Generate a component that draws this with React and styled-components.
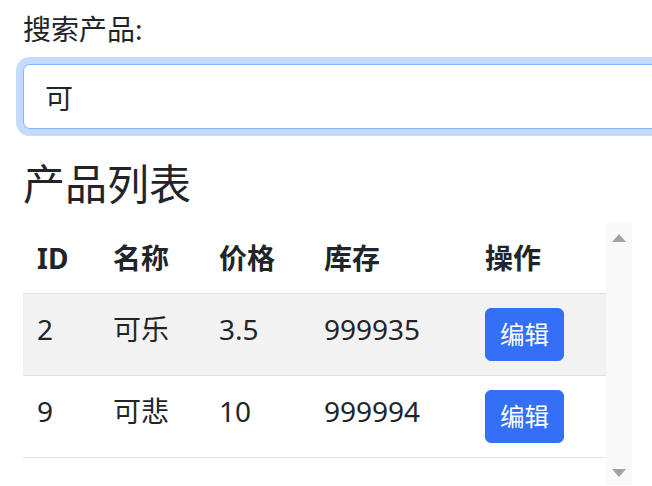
import { useEffect, useRef } from 'react';
import styled, { createGlobalStyle } from 'styled-components';

const GlobalStyle = createGlobalStyle`
  html, body {
    margin: 0;
    padding: 0;
    overflow: hidden;
    background: #ffffff;
  }
  body {
    font-family: "Noto Sans", "Noto Sans CJK SC", sans-serif;
    color: #212529;
  }
`;

const Page = styled.div`
  padding: 8px 0 0 23px;
  width: 720px;
`;

const Label = styled.label`
  display: block;
  font-size: 28px;
  line-height: 42px;
  margin-bottom: 14px;
`;

const SearchInput = styled.input`
  display: block;
  box-sizing: border-box;
  width: 700px;
  height: 65px;
  padding: 10px 21px;
  font-family: inherit;
  font-size: 28px;
  line-height: 42px;
  color: #212529;
  background: #fff;
  border: 1px solid #86b7fe;
  border-radius: 7px;
  box-shadow: 0 0 0 7px rgba(13, 110, 253, 0.25);
  outline: none;
  caret-color: #212529;
`;

const Heading = styled.h3`
  margin: 30px 0 14px;
  font-size: 42px;
  line-height: 50px;
  font-weight: 400;
`;

const ScrollBox = styled.div`
  display: flex;
  width: 609px;
  height: 262px;
`;

const TableArea = styled.div`
  flex: 1;
`;

const Table = styled.table`
  width: 100%;
  border-collapse: collapse;
  table-layout: fixed;
  vertical-align: top;
  font-size: 28px;
  line-height: 42px;
`;

const HeadCell = styled.th`
  text-align: left;
  font-weight: 700;
  padding: 14px;
  border-bottom: 1px solid #dee2e6;
`;

const Row = styled.tr`
  background: ${(p) => (p.$striped ? '#f2f2f2' : '#fff')};
`;

const Cell = styled.td`
  padding: 14px;
  border-bottom: 1px solid #dee2e6;
  vertical-align: top;
`;

const EditButton = styled.button`
  display: block;
  box-sizing: border-box;
  height: 53px;
  padding: 7px 14px;
  font-family: inherit;
  font-size: 24.5px;
  line-height: 37px;
  color: #fff;
  background: #3370f7;
  border: 1px solid #3370f7;
  border-radius: 6px;
  white-space: nowrap;
`;

const ScrollTrack = styled.div`
  width: 26px;
  background: #f9f9f9;
  display: flex;
  flex-direction: column;
  justify-content: space-between;
  align-items: center;
  padding: 11px 0 8px;
  box-sizing: border-box;
`;

const Arrow = ({ down }) => (
  <svg width="14" height="8" viewBox="0 0 14 8">
    <polygon points={down ? '0,0 14,0 7,8' : '0,8 14,8 7,0'} fill="#a3a3a3" />
  </svg>
);

const columns = [
  { key: 'id', title: 'ID', width: 76 },
  { key: 'name', title: '名称', width: 106 },
  { key: 'price', title: '价格', width: 105 },
  { key: 'stock', title: '库存', width: 161 },
  { key: 'op', title: '操作' },
];

const products = [
  { id: 2, name: '可乐', price: '3.5', stock: 999935 },
  { id: 9, name: '可悲', price: '10', stock: 999994 },
];

export default function App() {
  const inputRef = useRef(null);

  useEffect(() => {
    inputRef.current?.focus({ preventScroll: true });
  }, []);

  return (
    <>
      <GlobalStyle />
      <Page>
        <Label htmlFor="search">搜索产品:</Label>
        <SearchInput id="search" ref={inputRef} defaultValue="可" />
        <Heading>产品列表</Heading>
        <ScrollBox>
          <TableArea>
            <Table>
              <colgroup>
                {columns.map((c) => (
                  <col key={c.key} style={c.width ? { width: c.width } : undefined} />
                ))}
              </colgroup>
              <thead>
                <tr>
                  {columns.map((c) => (
                    <HeadCell key={c.key}>{c.title}</HeadCell>
                  ))}
                </tr>
              </thead>
              <tbody>
                {products.map((p, i) => (
                  <Row key={p.id} $striped={i % 2 === 0}>
                    <Cell>{p.id}</Cell>
                    <Cell>{p.name}</Cell>
                    <Cell>{p.price}</Cell>
                    <Cell>{p.stock}</Cell>
                    <Cell>
                      <EditButton>编辑</EditButton>
                    </Cell>
                  </Row>
                ))}
              </tbody>
            </Table>
          </TableArea>
          <ScrollTrack>
            <Arrow />
            <Arrow down />
          </ScrollTrack>
        </ScrollBox>
      </Page>
    </>
  );
}
